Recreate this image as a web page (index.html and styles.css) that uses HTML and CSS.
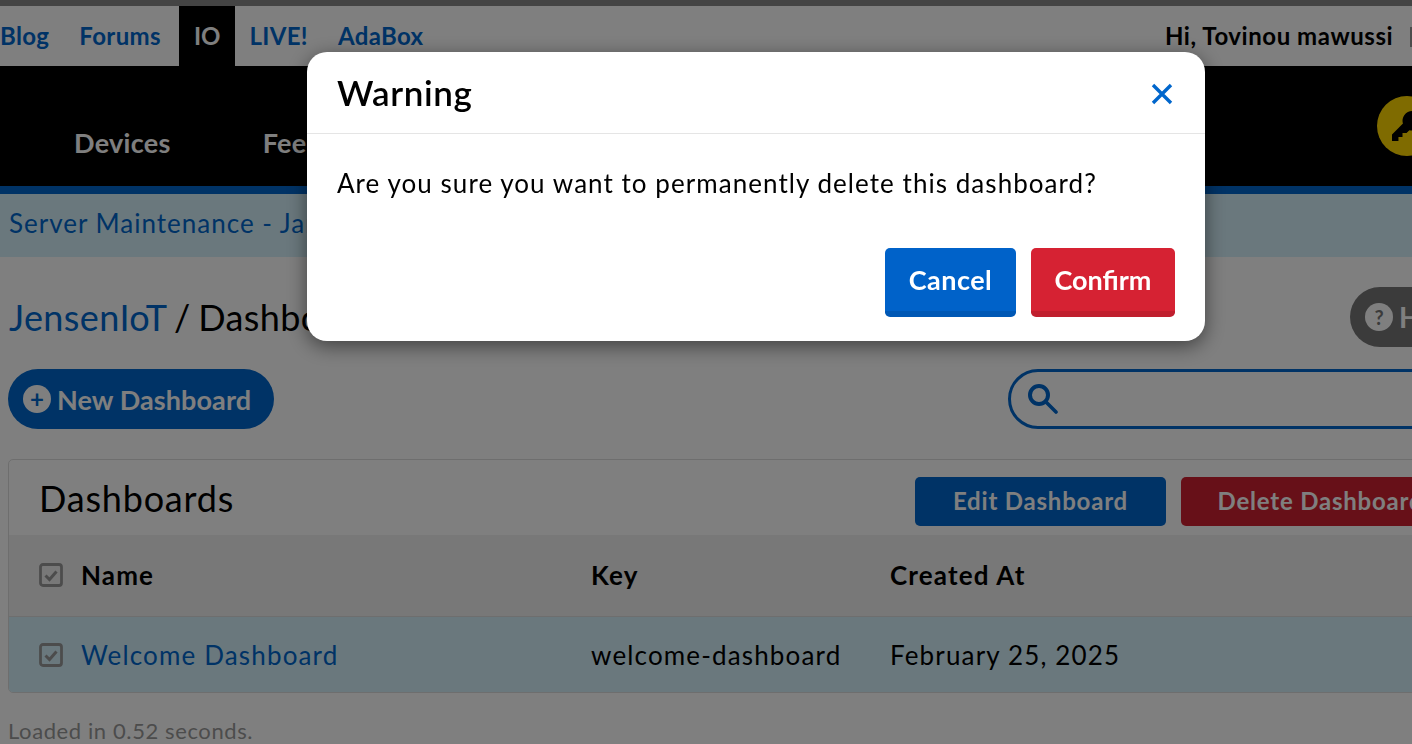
FILE: index.html
```html
<!DOCTYPE html>
<html lang="en">
<head>
<meta charset="utf-8">
<title>Dashboards</title>
<link rel="stylesheet" href="styles.css">
</head>
<body>
<div class="page">
  <div class="stripe"></div>
  <nav class="topnav">
    <div class="toplinks">
      <a class="toplink">Blog</a>
      <a class="toplink">Forums</a>
      <a class="toplink current">IO</a>
      <a class="toplink">LIVE!</a>
      <a class="toplink">AdaBox</a>
    </div>
    <div class="greet">Hi, Tovinou mawussi <span class="sep"></span></div>
  </nav>
  <header class="mainnav">
    <a class="mainlink">Devices</a>
    <a class="mainlink">Feeds</a>
    <span class="keybtn">
      <svg class="keyicon" viewBox="0 0 24 24"><path fill="#000" d="M15.5 2a6.5 6.5 0 0 0-6.2 8.4L2 17.7V22h4.3v-2.6H9v-2.7h2.7l1.9-1.9A6.5 6.5 0 1 0 15.5 2zm2 6.7a2 2 0 1 1 0-4 2 2 0 0 1 0 4z"/></svg>
    </span>
  </header>
  <div class="notice"><a class="notice-link">Server Maintenance - January 2025</a></div>
  <main class="content">
    <div class="titlerow">
      <h1 class="crumbs"><a class="crumb-link">JensenIoT</a> / Dashboards</h1>
      <span class="help"><span class="help-badge">?</span>Help</span>
    </div>
    <div class="actionrow">
      <button class="newbtn"><span class="plus">+</span>New Dashboard</button>
      <div class="search">
        <svg class="search-icon" viewBox="0 0 30 30"><circle cx="11" cy="11" r="9" fill="none" stroke="#0066cc" stroke-width="4"/><path d="M18 18l10 10" stroke="#0066cc" stroke-width="3.6" stroke-linecap="round"/></svg>
      </div>
    </div>
    <section class="card">
      <div class="card-head">
        <h2 class="card-title">Dashboards</h2>
        <div class="card-actions">
          <button class="cardbtn edit">Edit Dashboard</button>
          <button class="cardbtn del">Delete Dashboard</button>
        </div>
      </div>
      <div class="row head">
        <span class="cell c-name"><svg class="check" viewBox="0 0 24 24"><rect x="1.5" y="1.5" width="21" height="21" rx="2.5" fill="none" stroke="#999" stroke-width="2.8"/><path d="M6.5 12.5l4 4 7-8" fill="none" stroke="#999" stroke-width="3"/></svg><b>Name</b></span>
        <span class="cell c-key"><b>Key</b></span>
        <span class="cell c-date"><b>Created At</b></span>
      </div>
      <div class="row item">
        <span class="cell c-name"><svg class="check" viewBox="0 0 24 24"><rect x="1.5" y="1.5" width="21" height="21" rx="2.5" fill="none" stroke="#999" stroke-width="2.8"/><path d="M6.5 12.5l4 4 7-8" fill="none" stroke="#999" stroke-width="3"/></svg><a class="row-link">Welcome Dashboard</a></span>
        <span class="cell c-key">welcome-dashboard</span>
        <span class="cell c-date">February 25, 2025</span>
      </div>
    </section>
    <p class="loaded">Loaded in 0.52 seconds.</p>
  </main>
</div>
<div class="overlay"></div>
<div class="modal" role="dialog">
  <div class="modal-head">
    <h3 class="modal-title">Warning</h3>
    <svg class="modal-close" viewBox="0 0 22 22"><path d="M2 2l18 18M20 2L2 20" stroke="#0066cc" stroke-width="3.4" fill="none"/></svg>
  </div>
  <div class="modal-body">Are you sure you want to permanently delete this dashboard?</div>
  <div class="modal-foot">
    <button class="mbtn cancel">Cancel</button>
    <button class="mbtn confirm">Confirm</button>
  </div>
</div>
</body>
</html>
```
FILE: styles.css
```css
* { box-sizing: border-box; }
html, body { margin: 0; padding: 0; height: 744px; overflow: hidden; }
body { font-family: "Lato", "Liberation Sans", sans-serif; color: #000; background: #fff; }
a { color: #0066cc; text-decoration: none; }
button { font-family: inherit; border: 0; cursor: pointer; }
.page { width: 1512px; height: 744px; overflow: hidden; }
.stripe { height: 6px; background: #888; }
.topnav { height: 60px; display: flex; justify-content: space-between; align-items: stretch; }
.toplinks { display: flex; margin-left: -15px; }
.toplink { padding: 0 15px; line-height: 60px; font-size: 24px; font-weight: 700; letter-spacing: .35px; }
.toplink.current { background: #000; color: #fff; margin-left: 3px; margin-right: -1px; letter-spacing: 0; }
.greet { width: 347px; line-height: 60px; font-size: 24px; font-weight: 700; white-space: nowrap; letter-spacing: .55px; }
.sep { display: inline-block; width: 2px; height: 20px; margin-left: 10px; background: #999; vertical-align: -2px; }
.mainnav { height: 128px; background: #000; border-bottom: 8px solid #0066cc; display: flex; align-items: center; padding-left: 74px; gap: 92px; }
.mainlink { color: #fff; font-size: 27px; font-weight: 700; letter-spacing: .3px; padding-top: 32px; }
.keybtn { width: 60px; height: 60px; border-radius: 50%; background: #ffd700; margin-left: auto; margin-right: 75px; display: flex; align-items: center; justify-content: center; }
.keyicon { width: 36px; height: 36px; }
.notice { height: 63px; background: #d5f1fb; padding-left: 9px; line-height: 58px; font-size: 26px; letter-spacing: 1px; }
.content { padding: 0 8px; }
.titlerow { height: 112px; display: flex; justify-content: space-between; align-items: flex-start; padding-top: 30px; }
.crumbs { margin: 10px 0 0 1px; font-size: 36px; font-weight: 400; line-height: 40px; letter-spacing: .4px; word-spacing: -2px; }
.help { height: 60px; width: 154px; background: #777; color: #fff; border-radius: 30px; display: flex; align-items: center; padding-left: 15px; font-size: 28px; font-weight: 700; gap: 6px; }
.help-badge { width: 28px; height: 28px; border-radius: 50%; background: #fff; color: #777; font-size: 20px; display: flex; align-items: center; justify-content: center; }
.actionrow { height: 90px; display: flex; justify-content: space-between; align-items: flex-start; }
.newbtn { height: 60px; width: 266px; background: #0066cc; color: #fff; border-radius: 30px; font-size: 27px; font-weight: 700; letter-spacing: .1px; display: flex; align-items: center; padding: 0 0 0 15px; gap: 6px; }
.plus { width: 28px; height: 28px; border-radius: 50%; background: #fff; color: #0066cc; display: flex; align-items: center; justify-content: center; font-size: 24px; line-height: 1; }
.search { width: 496px; height: 60px; border: 3px solid #0066cc; border-radius: 30px; display: flex; align-items: center; padding-left: 17px; }
.search-icon { width: 30px; height: 30px; }
.card { border: 1px solid #ddd; border-radius: 5px; overflow: hidden; }
.card-head { height: 75px; display: flex; justify-content: space-between; align-items: center; padding: 0 43px 0 30px; }
.card-title { margin: 0; font-size: 36px; font-weight: 400; letter-spacing: .8px; }
.card-actions { display: flex; gap: 15px; padding-top: 8px; }
.cardbtn { height: 49px; border-radius: 5px; color: #fff; font-size: 24px; font-weight: 700; letter-spacing: .8px; padding: 0 0 2px; }
.edit { width: 251px; background: #0066cc; }
.del { width: 279px; background: #cf2030; }
.row { display: flex; align-items: center; font-size: 26px; letter-spacing: 1.15px; }
.row.head { height: 82px; background: #f0f0f0; border-bottom: 1px solid #ddd; padding-bottom: 2px; }
.row.item { height: 75px; background: #d5f1fb; }
.row b { font-weight: 700; }
.cell { display: flex; align-items: center; white-space: nowrap; }
.c-name { width: 582px; padding-left: 30px; gap: 18px; }
.c-key { width: 299px; }
.check { width: 24px; height: 24px; }
.row-link { color: #0066cc; }
.loaded { margin: 24px 0 0; font-size: 22px; color: #999; letter-spacing: .6px; }
.overlay { position: fixed; inset: 0; background: rgba(0,0,0,.5); }
.modal { position: fixed; left: 307px; top: 52px; width: 898px; height: 289px; background: #fff; border-radius: 20px; box-shadow: 0 5px 20px rgba(0,0,0,.5); display: flex; flex-direction: column; }
.modal-head { height: 82px; border-bottom: 1px solid #e5e5e5; display: flex; justify-content: space-between; align-items: center; padding: 0 32px 0 30px; }
.modal-title { margin: 0 0 2px; font-size: 35px; font-weight: 600; letter-spacing: .6px; }
.modal-close { width: 22px; height: 22px; margin-top: 2px; }
.modal-body { padding: 31px 30px 0; font-size: 26px; line-height: 36px; height: 114px; letter-spacing: 1.05px; }
.modal-foot { display: flex; justify-content: flex-end; gap: 15px; padding-right: 30px; }
.mbtn { height: 69px; border-radius: 5px; color: #fff; font-size: 27px; font-weight: 700; padding: 0; }
.cancel { width: 131px; background: #0062c9; border-bottom: 6px solid #0058b5; letter-spacing: .5px; }
.confirm { width: 144px; background: #d62233; border-bottom: 6px solid #c01f2e; }
```
